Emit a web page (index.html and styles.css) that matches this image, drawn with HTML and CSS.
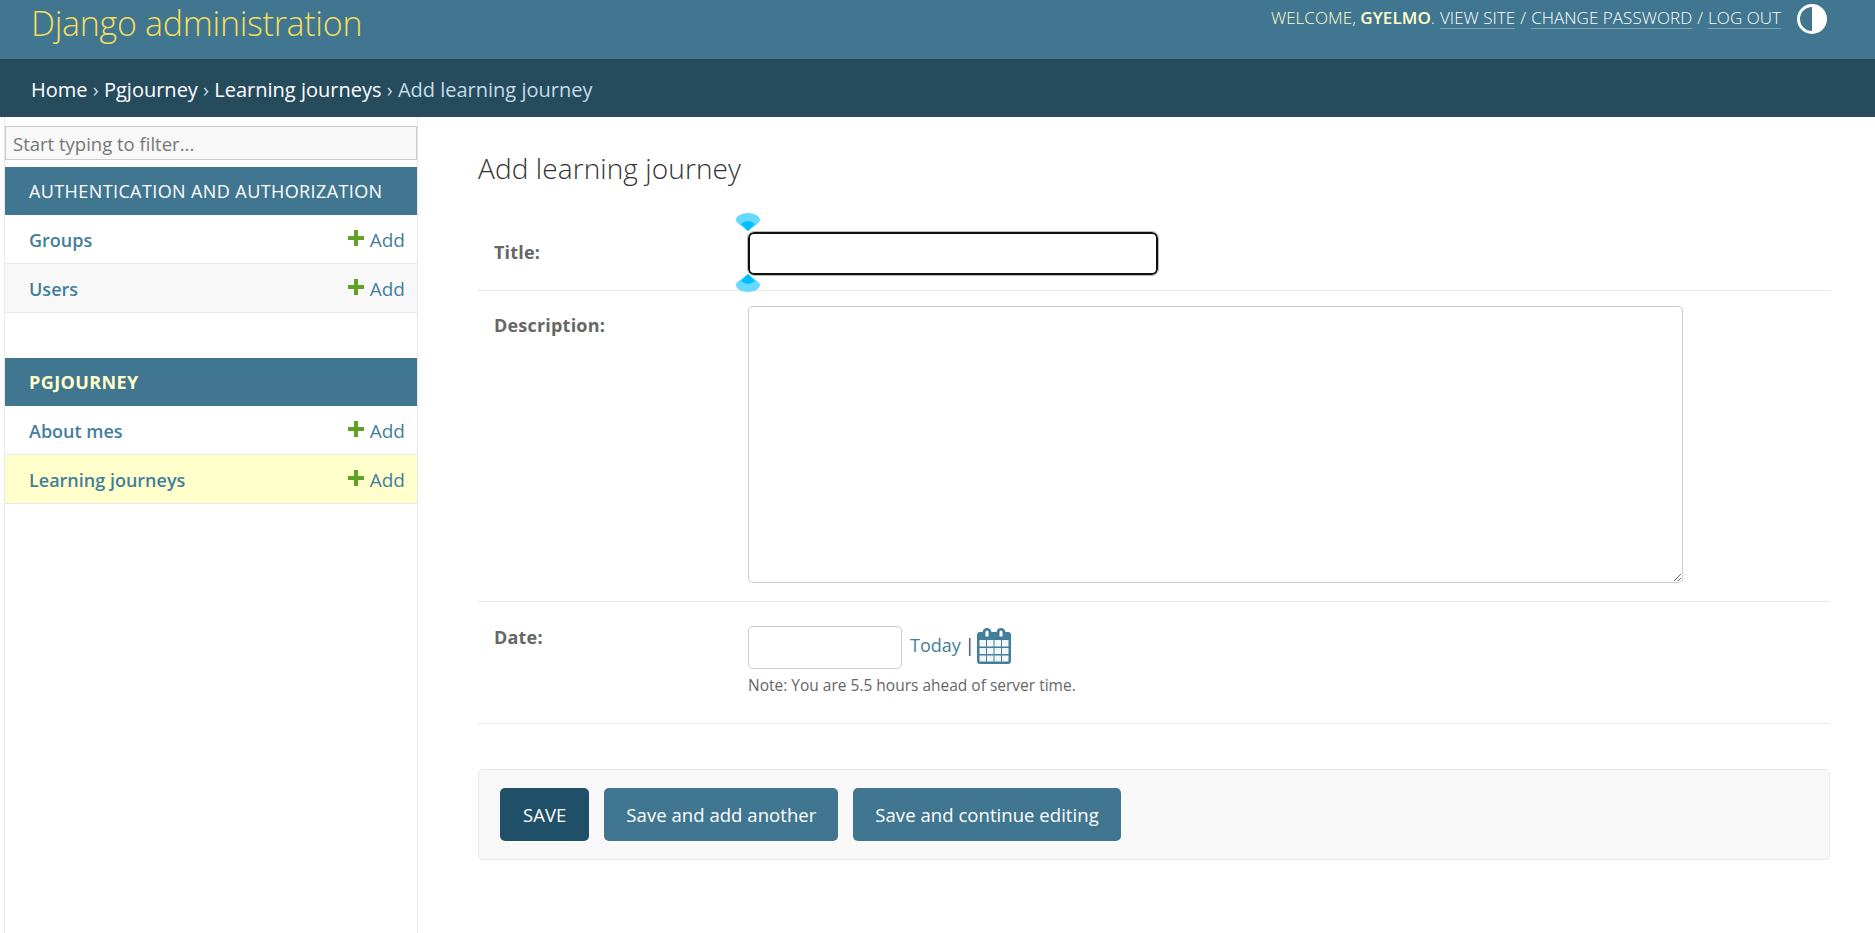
FILE: index.html
```html
<!DOCTYPE html>
<html lang="en">
<head>
    <meta charset="UTF-8">
    <meta name="viewport" content="width=device-width, initial-scale=1.0">
    <title>Add learning journey | Django site admin</title>
    <link rel="stylesheet" href="styles.css">
</head>
<body>
    <!-- Header -->
    <header id="header">
        <h1 class="branding"><a href="#">Django administration</a></h1>
        <div class="user-tools">
            <span>Welcome, <strong>gyelmo</strong>.</span>
            <a href="#">View site</a> /
            <a href="#">Change password</a> /
            <a href="#">Log out</a>
            <svg class="theme-icon" viewBox="0 0 30 30">
                <circle cx="15" cy="15" r="13.500" fill="#417690" stroke="#fff" stroke-width="3"/>
                <path d="M15 1.500a13.500 13.500 0 0 1 0 27z" fill="#fff"/>
            </svg>
        </div>
    </header>

    <!-- Breadcrumbs -->
    <div class="breadcrumbs">
        <a href="#">Home</a> <span class="sep">›</span>
        <a href="#">Pgjourney</a> <span class="sep">›</span>
        <a href="#">Learning journeys</a> <span class="sep">›</span>
        Add learning journey
    </div>

    <div class="page">
        <!-- Sidebar -->
        <nav class="sidebar">
            <input class="nav-filter" type="text" placeholder="Start typing to filter...">

            <div class="module">
                <div class="caption">Authentication and Authorization</div>
                <div class="model-row">
                    <a href="#" class="model-name">Groups</a>
                    <a href="#" class="add-link"><svg class="plus" viewBox="0 0 16 16"><path d="M6 0h4v6h6v4h-6v6H6v-6H0V6h6z"/></svg>Add</a>
                </div>
                <div class="model-row alt">
                    <a href="#" class="model-name">Users</a>
                    <a href="#" class="add-link"><svg class="plus" viewBox="0 0 16 16"><path d="M6 0h4v6h6v4h-6v6H6v-6H0V6h6z"/></svg>Add</a>
                </div>
            </div>

            <div class="module">
                <div class="caption current-app">Pgjourney</div>
                <div class="model-row">
                    <a href="#" class="model-name">About mes</a>
                    <a href="#" class="add-link"><svg class="plus" viewBox="0 0 16 16"><path d="M6 0h4v6h6v4h-6v6H6v-6H0V6h6z"/></svg>Add</a>
                </div>
                <div class="model-row current-model">
                    <a href="#" class="model-name">Learning journeys</a>
                    <a href="#" class="add-link"><svg class="plus" viewBox="0 0 16 16"><path d="M6 0h4v6h6v4h-6v6H6v-6H0V6h6z"/></svg>Add</a>
                </div>
            </div>
        </nav>

        <!-- Content -->
        <main class="content">
            <h1 class="page-title">Add learning journey</h1>

            <form>
                <div class="form-row row-title">
                    <label class="field-label" for="id_title">Title:</label>
                    <div class="field-box">
                        <input class="text-input" id="id_title" type="text">
                        <svg class="handle handle-top" viewBox="0 0 24 18">
                            <path d="M0 7C0 3 6 0 12 0s12 3 12 7c0 3-7 7-12 11C7 14 0 10 0 7z" fill="#66d9ff"/>
                            <path d="M5 11q7-6 14 0l-7 7z" fill="#00bfff"/>
                        </svg>
                        <svg class="handle handle-bottom" viewBox="0 0 24 18">
                            <path d="M0 11C0 15 6 18 12 18s12-3 12-7c0-3-7-7-12-11C7 4 0 8 0 11z" fill="#66d9ff"/>
                            <path d="M5 7q7 6 14 0l-7-7z" fill="#00bfff"/>
                        </svg>
                    </div>
                </div>

                <div class="form-row row-description">
                    <label class="field-label" for="id_description">Description:</label>
                    <textarea class="text-area" id="id_description"></textarea>
                </div>

                <div class="form-row row-date">
                    <label class="field-label" for="id_date">Date:</label>
                    <div class="date-box">
                        <div class="date-line">
                            <input class="date-input" id="id_date" type="text">
                            <a href="#" class="today">Today</a> <span class="pipe">|</span>
                            <svg class="calendar" viewBox="0 0 34 36">
                                <path fill="#447e9b" d="M3 4h2.500V4.500a4.500 4.500 0 0 1 9 0V4h5v.5a4.500 4.500 0 0 1 9 0V4H31a3 3 0 0 1 3 3v26a3 3 0 0 1-3 3H3a3 3 0 0 1-3-3V7a3 3 0 0 1 3-3z"/>
                                <path fill="#fff" d="M8.500 4a1.500 1.500 0 0 1 3 0v4.500h-3zM22.500 4a1.500 1.500 0 0 1 3 0v4.500h-3z"/>
                                <path fill="#f2f6f8" d="M2.500 12h6.500v6.500H2.500zM10 12h6.500v6.500H10zM17.500 12H24v6.500h-6.500zM25 12h6.500v6.500H25zM2.500 20H9v6H2.500zM10 20h6.500v6H10zM17.500 20H24v6h-6.500zM25 20h6.500v6H25zM2.500 27.500H9v6H2.500zM10 27.500h6.500v6H10zM17.500 27.500H24v6h-6.500zM25 27.500h6.500v6H25z"/>
                            </svg>
                        </div>
                        <p class="timezone-note">Note: You are 5.5 hours ahead of server time.</p>
                    </div>
                </div>

                <div class="submit-row">
                    <button class="btn btn-default" type="button">Save</button>
                    <button class="btn" type="button">Save and add another</button>
                    <button class="btn" type="button">Save and continue editing</button>
                </div>
            </form>
        </main>
    </div>
</body>
</html>
```

FILE: styles.css
```css
/* General Styles */
html, body {
    height: 100%;
}

body {
    font-family: "Open Sans", "Liberation Sans", sans-serif;
    margin: 0;
    padding: 0;
    background-color: #fff;
    color: #333;
    display: flex;
    flex-direction: column;
    overflow: hidden;
}

a {
    text-decoration: none;
}

/* Header */
#header {
    height: 59px;
    box-sizing: border-box;
    background-color: #417690;
    display: flex;
    justify-content: space-between;
    padding: 0 48px 0 31px;
    flex-shrink: 0;
}

.branding {
    margin: 0;
    font-size: 34px;
    font-weight: 300;
    line-height: 47px;
    letter-spacing: -0.3px;
}

.branding a {
    color: #f5dd5d;
}

.user-tools {
    display: flex;
    align-items: flex-start;
    gap: 5px;
    height: 37px;
    padding-top: 4px;
    color: #ffc;
    font-size: 17px;
    font-weight: 300;
    text-transform: uppercase;
    line-height: 28px;
    letter-spacing: 0.05px;
}

.user-tools strong {
    font-weight: 600;
}

.user-tools a {
    color: #fff;
    height: 24px;
    border-bottom: 1px solid rgba(255, 255, 255, 0.3);
}

.theme-icon {
    width: 30px;
    height: 30px;
    margin-left: 11px;
}

/* Breadcrumbs */
.breadcrumbs {
    height: 58px;
    box-sizing: border-box;
    background-color: #264b5d;
    color: #c4dce8;
    padding: 0 31px;
    font-size: 20px;
    line-height: 61px;
    flex-shrink: 0;
}

.breadcrumbs a {
    color: #fff;
}

.sep {
    color: #c4dce8;
}

/* Page */
.page {
    flex: 1;
    display: flex;
    min-height: 0;
}

/* Sidebar */
.sidebar {
    width: 414px;
    margin-left: 4px;
    box-sizing: border-box;
    border-right: 1px solid #e8e8e8;
    border-left: 1px solid #e8e8e8;
    padding-top: 9px;
    flex-shrink: 0;
}

.nav-filter {
    display: block;
    width: 100%;
    height: 34px;
    box-sizing: border-box;
    margin: 0 0 7px;
    padding: 0 7px;
    border: 1px solid #ccc;
    background-color: #f8f8f8;
    font-family: inherit;
    font-size: 18.5px;
}

.nav-filter::placeholder {
    color: #777;
    opacity: 1;
}

.module {
    margin-bottom: 45px;
}

.caption {
    height: 48px;
    background-color: #417690;
    color: #fff;
    padding: 0 24px;
    font-size: 18px;
    line-height: 49px;
    text-transform: uppercase;
    letter-spacing: 0.4px;
}

.caption.current-app {
    color: #ffc;
    font-weight: 700;
}

.model-row {
    height: 49px;
    box-sizing: border-box;
    display: flex;
    justify-content: space-between;
    align-items: center;
    padding: 2px 12px 0 24px;
    border-bottom: 1px solid #e8e8e8;
    font-size: 18px;
}

.model-row.alt {
    background-color: #f8f8f8;
}

.model-row.current-model {
    background-color: #ffc;
}

.model-name {
    color: #447e9b;
    font-weight: 600;
}

.add-link {
    color: #447e9b;
    display: flex;
    align-items: center;
    gap: 6px;
    font-size: 19px;
}

.plus {
    width: 16px;
    height: 16px;
    fill: #5fa225;
    margin-top: -4px;
}

/* Content */
.content {
    flex: 1;
    padding: 0 45px 0 60px;
    min-width: 0;
}

.page-title {
    margin: 31px 0 0;
    height: 44px;
    font-size: 28px;
    font-weight: 300;
    line-height: 40px;
    letter-spacing: 0.1px;
    color: #333;
}

.form-row {
    display: flex;
    border-bottom: 1px solid #e8e8e8;
    padding-left: 16px;
}

.field-label {
    width: 254px;
    flex-shrink: 0;
    color: #666;
    font-size: 18px;
    font-weight: 700;
    letter-spacing: 0.2px;
}

.row-title {
    padding-top: 40px;
    height: 99px;
    box-sizing: border-box;
}

.row-title .field-label {
    line-height: 40px;
}

.field-box {
    position: relative;
    align-self: flex-start;
}

.text-input {
    display: block;
    width: 410px;
    height: 43px;
    box-sizing: border-box;
    border: 2.5px solid #111;
    border-radius: 6px;
    outline: 1px solid #bbb;
    background-color: #fff;
}

.handle {
    position: absolute;
    left: -12px;
    width: 24px;
    height: 18px;
}

.handle-top {
    top: -19px;
}

.handle-bottom {
    top: 42px;
}

.row-description {
    padding-top: 15px;
    padding-bottom: 18px;
}

.row-description .field-label {
    line-height: 36px;
    margin-top: 1px;
}

.row-date .field-label {
    line-height: 36px;
    margin-top: -7px;
}

.text-area {
    display: block;
    width: 935px;
    height: 277px;
    box-sizing: border-box;
    border: 1px solid #ccc;
    border-radius: 5px;
    background-color: #fff;
    padding: 6px;
    margin: 0;
}

.row-date {
    padding-top: 24px;
    height: 122px;
    box-sizing: border-box;
}

.date-line {
    display: flex;
    align-items: flex-start;
    color: #447e9b;
    font-size: 18px;
    line-height: 38px;
}

.date-input {
    width: 154px;
    height: 43px;
    box-sizing: border-box;
    border: 1px solid #ccc;
    border-radius: 5px;
    background-color: #fff;
    margin-right: 8px;
}

.today {
    color: #447e9b;
}

.pipe {
    color: #264b5d;
    margin: 0 2px 0 4px;
}

.calendar {
    width: 34px;
    height: 36px;
    margin-top: 2px;
}

.timezone-note {
    margin: 5px 0 0;
    color: #666;
    font-size: 15.5px;
    line-height: 22px;
}

/* Buttons */
.submit-row {
    margin-top: 45px;
    height: 91px;
    box-sizing: border-box;
    display: flex;
    align-items: center;
    gap: 15px;
    padding: 0 21px;
    background-color: #f8f8f8;
    border: 1px solid #e8e8e8;
    border-radius: 5px;
}

.btn {
    height: 53px;
    padding: 0 22px;
    border: none;
    border-radius: 5px;
    background-color: #417690;
    color: #fff;
    font-family: inherit;
    font-size: 18.5px;
    letter-spacing: 0.05px;
    cursor: pointer;
}

.btn-default {
    padding: 0 23px;
    background-color: #205067;
    text-transform: uppercase;
}
```
